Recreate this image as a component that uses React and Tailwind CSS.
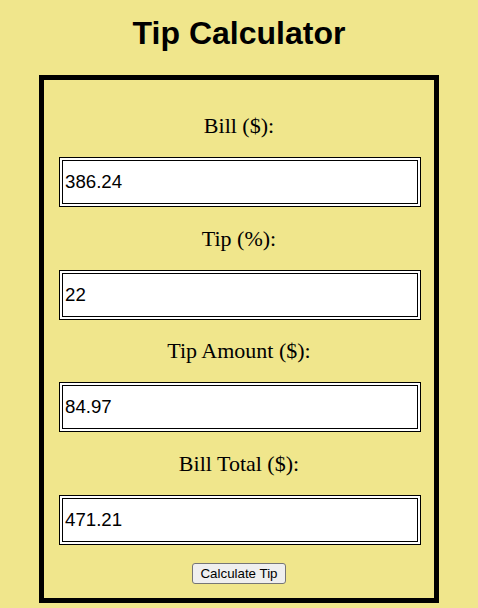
import { useState } from "react";

// one label + input pair
function Field({ label, value, onChange }) {
  return (
    <div className="flex flex-col items-center">
      <label className="text-[22px] leading-[25px] text-black mb-[19px]">{label}</label>
      <input
        type="text"
        value={value}
        onChange={(e) => onChange(e.target.value)}
        className="ml-[2px] w-[362px] h-[50px] border-4 border-double border-black bg-white px-[2px] text-[18.67px] text-black outline-none"
        style={{ fontFamily: '"Liberation Sans", Arial, sans-serif' }}
      />
    </div>
  );
}

export default function App() {
  const [bill, setBill] = useState("386.24");
  const [tip, setTip] = useState("22");
  const [amount, setAmount] = useState("84.97");
  const [total, setTotal] = useState("471.21");

  const calculate = () => {
    const b = parseFloat(bill) || 0;
    const t = parseFloat(tip) || 0;
    const a = (b * t) / 100;
    setAmount(a.toFixed(2));
    setTotal((b + a).toFixed(2));
  };

  return (
    <div className="min-h-[608px] w-full bg-[#f0e68c] pt-[15px] overflow-hidden font-['Liberation_Serif',serif]">
      <h1 className="text-center text-[32px] leading-[37px] font-bold text-black font-['Liberation_Sans',Arial,sans-serif]">
        Tip Calculator
      </h1>

      <div className="mx-auto mt-[23px] w-[400px] h-[528px] border-[5px] border-black pt-[33px] flex flex-col items-center gap-[18.5px]">
        <Field label="Bill ($):" value={bill} onChange={setBill} />
        <Field label="Tip (%):" value={tip} onChange={setTip} />
        <Field label="Tip Amount ($):" value={amount} onChange={setAmount} />
        <Field label="Bill Total ($):" value={total} onChange={setTotal} />

        <button
          onClick={calculate}
          className="w-[94px] h-[21px] border border-[#767676] bg-[#efefef] rounded-[3px] text-[13.33px] text-black leading-none font-['Liberation_Sans',Arial,sans-serif]"
        >
          Calculate Tip
        </button>
      </div>
    </div>
  );
}
